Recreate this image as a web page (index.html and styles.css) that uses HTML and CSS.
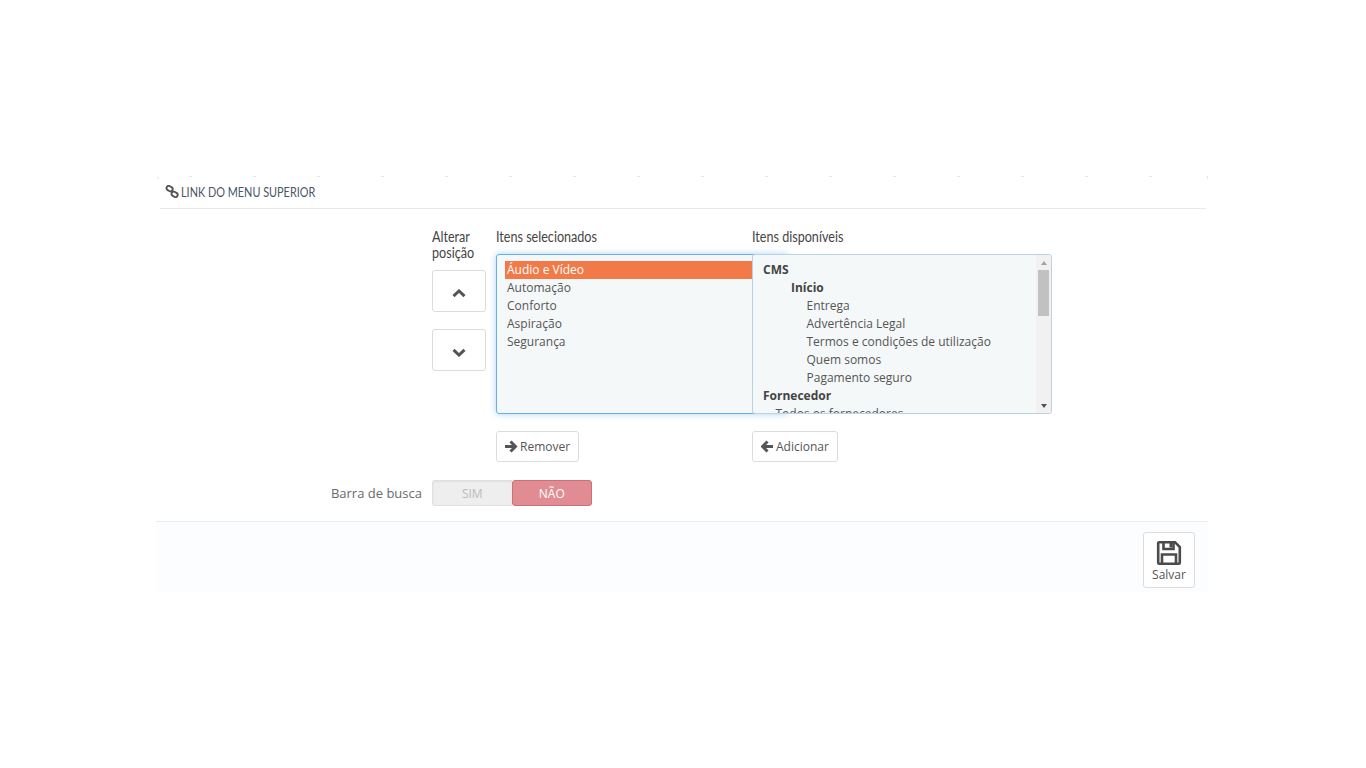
FILE: index.html
```html
<!DOCTYPE html>
<html lang="pt">
<head>
<meta charset="utf-8">
<title>Link do menu superior</title>
<link rel="stylesheet" href="styles.css">
</head>
<body>
<div class="panel">
  <div class="dashes"></div>
  <h3 class="heading">
    <svg class="link-icon" viewBox="0 0 14 14" width="14" height="13"><g fill="none" stroke="#555" stroke-width="2"><rect x="1" y="1.500" width="6.800" height="4.800" rx="2.400" transform="rotate(30 4.400 3.900)"/><rect x="6.400" y="7.700" width="6.800" height="4.800" rx="2.400" transform="rotate(30 9.800 10.100)"/></g></svg>
    <span class="heading-text">LINK DO MENU SUPERIOR</span>
  </h3>
  <div class="form-body">
    <div class="picker">
      <div class="col-move">
        <div class="col-title">Alterar<br>posição</div>
        <button class="move-btn"><svg viewBox="0 0 14 9" width="14" height="9"><path d="M1.500 7.200 7 2l5.500 5.200" fill="none" stroke="#555" stroke-width="3"/></svg></button>
        <button class="move-btn"><svg viewBox="0 0 14 9" width="14" height="9"><path d="M1.500 1.800 7 7l5.500-5.200" fill="none" stroke="#555" stroke-width="3"/></svg></button>
      </div>
      <div class="col-selected">
        <div class="col-title">Itens selecionados</div>
        <div class="listbox focused">
          <div class="opt selected">Áudio e Vídeo</div>
          <div class="opt">Automação</div>
          <div class="opt">Conforto</div>
          <div class="opt">Aspiração</div>
          <div class="opt">Segurança</div>
        </div>
        <button class="action-btn"><svg viewBox="0 0 13 13" width="13" height="13"><path d="M0 6.500h10.500M5.500 1.500l5 5-5 5" fill="none" stroke="#555" stroke-width="3"/></svg>Remover</button>
      </div>
      <div class="col-available">
        <div class="col-title">Itens disponíveis</div>
        <div class="listbox available">
          <div class="opt group">CMS</div>
          <div class="opt group lvl1">Início</div>
          <div class="opt lvl2">Entrega</div>
          <div class="opt lvl2">Advertência Legal</div>
          <div class="opt lvl2">Termos e condições de utilização</div>
          <div class="opt lvl2">Quem somos</div>
          <div class="opt lvl2">Pagamento seguro</div>
          <div class="opt group">Fornecedor</div>
          <div class="opt lvl3">Todos os fornecedores</div>
          <div class="scrollbar">
            <span class="arrow up"></span>
            <span class="thumb"></span>
            <span class="arrow down"></span>
          </div>
        </div>
        <button class="action-btn"><svg viewBox="0 0 13 13" width="13" height="13"><path d="M12 6.500H1.500M6.500 1.500l-5 5 5 5" fill="none" stroke="#555" stroke-width="3"/></svg>Adicionar</button>
      </div>
    </div>
    <div class="search-row">
      <label class="search-label">Barra de busca</label>
      <div class="switch">
        <span class="sw-off">SIM</span>
        <span class="sw-on">NÃO</span>
      </div>
    </div>
  </div>
  <div class="footer">
    <button class="save-btn">
      <svg viewBox="0 0 26 26" width="26" height="26"><path d="M2.200 3.200a1 1 0 0 1 1-1h15.800l4.800 4.800v15.800a1 1 0 0 1-1 1h-19.600a1 1 0 0 1-1-1z" fill="none" stroke="#4b4b4b" stroke-width="2.600"/><path d="M7.500 2.500v6.500h10V2.500M6 23.500v-9h14v9" fill="none" stroke="#4b4b4b" stroke-width="2.600"/><rect x="13.500" y="3" width="2.800" height="4.500" fill="#4b4b4b"/></svg>
      <span>Salvar</span>
    </button>
  </div>
</div>
</body>
</html>
```
FILE: styles.css
```css
* { box-sizing: border-box; }
html, body { margin: 0; background: #fff; }
body { padding: 176px 158px 0 156px; font-family: "Open Sans", "Liberation Sans", sans-serif; font-size: 12px; color: #555; }
button { font-family: inherit; cursor: pointer; }
.panel { position: relative; width: 1052px; }
.dashes { position: absolute; top: 0; left: 33px; right: 0; height: 1px; background: repeating-linear-gradient(90deg, #e6e6e6 0 3px, transparent 3px 64px); }
.dashes::before { content: ""; position: absolute; left: -32px; top: 1px; width: 2px; height: 2px; background: #efefef; }
.dashes::after { content: ""; position: absolute; right: 0; top: 0; width: 1px; height: 3px; background: #e6e6e6; }
.heading { margin: 0 2px 0 4px; height: 33px; border-bottom: 1px solid #e8e8e8; display: flex; align-items: center; gap: 2px; padding: 0 0 2px 5px; font-family: "Lato", "Liberation Sans", sans-serif; font-weight: 400; font-size: 14px; color: #4a5565; }
.heading-text { display: inline-block; transform: scaleX(.777); transform-origin: left center; white-space: nowrap; }
.form-body { padding: 20px 0 0; }
.picker { display: flex; margin-left: 276px; }
.col-title { font-family: "Lato", "Liberation Sans", sans-serif; font-size: 14.500px; line-height: 16px; color: #444; transform: scaleX(.868); transform-origin: left top; white-space: nowrap; }
.col-move { width: 64px; }
.col-move .col-title { margin-bottom: 9px; }
.move-btn { display: flex; align-items: center; justify-content: center; width: 54px; height: 42px; padding: 4px 0 0; margin-bottom: 17px; background: #fff; border: 1px solid #dcdcdc; border-radius: 3px; }
.col-selected { width: 256px; position: relative; }
.col-available { width: 300px; position: relative; z-index: 1; }
.col-selected .col-title, .col-available .col-title { margin-bottom: 9px; }
.listbox { height: 160px; background: #f4f8f9; overflow: hidden; font-size: 12px; line-height: 18px; }
.listbox.focused { width: 292px; margin-right: -36px; padding: 6px 0 0 8px; border: 1px solid #66afe9; border-radius: 3px; box-shadow: 0 0 6px rgba(102,175,233,.55); }
.listbox.available { position: relative; padding: 6px 0 0 10px; border: 1px solid #b9d3e0; border-radius: 3px; }
.opt { height: 18px; padding-left: 2px; white-space: nowrap; }
.opt.selected { background: #f17a48; color: #fff; }
.listbox.available .opt { padding-left: 0; }
.opt.group { font-weight: 700; color: #444; }
.listbox.available .lvl1 { padding-left: 28px; }
.listbox.available .lvl2 { padding-left: 43.500px; }
.listbox.available .lvl3 { padding-left: 12.500px; }
.scrollbar { position: absolute; top: 0; right: 0; bottom: 0; width: 15px; background: #f1f1f1; display: flex; flex-direction: column; align-items: center; }
.thumb { width: 11px; height: 46px; background: #c1c1c1; margin-top: 1px; }
.arrow { display: block; width: 0; height: 0; border-left: 3.500px solid transparent; border-right: 3.500px solid transparent; }
.arrow.up { margin-top: 6px; margin-bottom: 4px; border-bottom: 4px solid #a3a3a3; }
.arrow.down { margin-top: auto; margin-bottom: 5px; border-top: 4px solid #505050; }
.action-btn { display: inline-flex; align-items: center; gap: 2px; height: 31px; margin-top: 17px; padding: 0 8px; background: #fff; border: 1px solid #dcdcdc; border-radius: 3px; font-size: 12px; color: #555; }
.search-row { display: flex; align-items: center; margin-top: 18px; height: 26px; }
.search-label { width: 266px; text-align: right; font-size: 13px; color: #6a6a6a; }
.switch { display: flex; width: 160px; height: 26px; margin-left: 10px; font-size: 12px; }
.switch span { flex: 1; display: flex; align-items: center; justify-content: center; border-radius: 3px; }
.sw-off { background: #eee; color: #bbb; border: 1px solid #e0e0e0; border-right: 0; border-radius: 3px 0 0 3px !important; box-shadow: inset 0 1px 2px rgba(0,0,0,.06); }
.sw-on { background: #e08c92; color: #fff; border: 1px solid #cc6f76; }
.footer { display: flex; justify-content: flex-end; height: 71px; margin-top: 15px; padding: 10px 13px 0 0; background: #fcfdfe; border-top: 1px solid #eaedf0; }
.save-btn { display: flex; flex-direction: column; align-items: center; width: 52px; height: 56px; padding: 7px 0 0; background: #fff; border: 1px solid #dcdcdc; border-radius: 3px; font-size: 12px; color: #555; line-height: 17px; }
```
